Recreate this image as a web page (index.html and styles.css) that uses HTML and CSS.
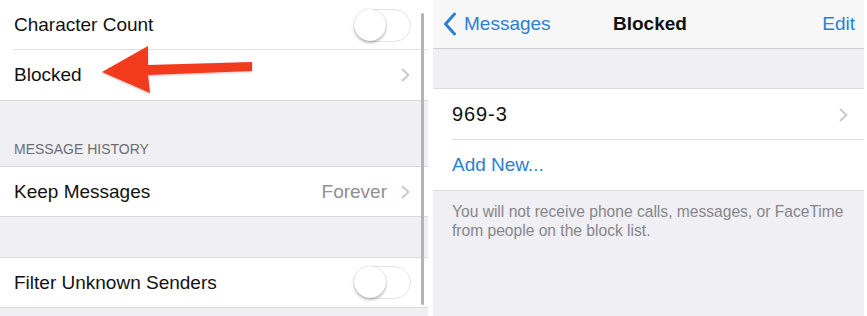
FILE: index.html
```html
<!DOCTYPE html>
<html>
<head>
<meta charset="utf-8">
<link rel="stylesheet" href="styles.css">
</head>
<body>
<div class="screen">
  <section class="panel left">
    <div class="row first inset">
      <span class="label">Character Count</span>
      <span class="switch"><span class="knob"></span></span>
    </div>
    <div class="row">
      <span class="label">Blocked</span>
      <svg class="chev" viewBox="0 0 9 14" width="9" height="14"><path d="M1.5 1.5 L7.5 7 L1.5 12.5" fill="none" stroke="#c7c7cc" stroke-width="1.8" stroke-linecap="round" stroke-linejoin="round"/></svg>
    </div>
    <div class="group-header">MESSAGE HISTORY</div>
    <div class="row bordered">
      <span class="label">Keep Messages</span>
      <span class="value">Forever</span>
      <svg class="chev" viewBox="0 0 9 14" width="9" height="14"><path d="M1.5 1.5 L7.5 7 L1.5 12.5" fill="none" stroke="#c7c7cc" stroke-width="1.8" stroke-linecap="round" stroke-linejoin="round"/></svg>
    </div>
    <div class="spacer"></div>
    <div class="row bordered">
      <span class="label">Filter Unknown Senders</span>
      <span class="switch"><span class="knob"></span></span>
    </div>
    <div class="scrollbar"></div>
    <svg class="arrow" viewBox="0 0 170 60" width="170" height="60">
      <defs>
        <filter id="sh" x="-10%" y="-20%" width="120%" height="140%">
          <feDropShadow dx="0" dy="1" stdDeviation="1" flood-color="#000" flood-opacity="0.25"/>
        </filter>
      </defs>
      <polygon filter="url(#sh)" fill="#f23a1d" points="12,32 58,6 58,25 162,22 162,31 58,35 60,53"/>
    </svg>
  </section>
  <section class="panel right">
    <header class="nav">
      <span class="back">
        <svg viewBox="0 0 14 24" width="14" height="24"><path d="M11.5 2 L2.5 12 L11.5 22" fill="none" stroke="#2b7fd4" stroke-width="3" stroke-linecap="round" stroke-linejoin="round"/></svg>
        <span>Messages</span>
      </span>
      <span class="title">Blocked</span>
      <span class="edit">Edit</span>
    </header>
    <div class="gap"></div>
    <div class="list">
      <div class="row inset-r">
        <span class="label num">969-3</span>
        <svg class="chev" viewBox="0 0 9 14" width="9" height="14"><path d="M1.5 1.5 L7.5 7 L1.5 12.5" fill="none" stroke="#c7c7cc" stroke-width="1.8" stroke-linecap="round" stroke-linejoin="round"/></svg>
      </div>
      <div class="row">
        <span class="label blue">Add New...</span>
      </div>
    </div>
    <p class="footer">You will not receive phone calls, messages, or FaceTime from people on the block list.</p>
  </section>
</div>
</body>
</html>
```
FILE: styles.css
```css
* { box-sizing: border-box; }
html, body {
  margin: 0;
  padding: 0;
  background: #ffffff;
}
body {
  font-family: "Liberation Sans", Arial, sans-serif;
  color: #111;
  width: 867px;
  height: 316px;
  overflow: hidden;
}
.screen {
  display: flex;
  gap: 5px;
  height: 316px;
}
.panel {
  background: #efeff4;
  height: 316px;
  display: flex;
  flex-direction: column;
}
.left {
  width: 428px;
  position: relative;
}
.right {
  width: 431px;
}
.row {
  background: #fff;
  height: 51px;
  display: flex;
  align-items: center;
  padding: 0 18px 0 14px;
  border-bottom: 1px solid #d9d9de;
  position: relative;
  flex-shrink: 0;
}
.row.first {
  height: 50px;
  border-bottom: none;
}
.row.inset::after {
  content: "";
  position: absolute;
  left: 13px;
  right: 0;
  bottom: 0;
  height: 1px;
  background: #e0e0e4;
}
.row.bordered {
  border-top: 1px solid #d9d9de;
}
.label {
  font-size: 19px;
  flex: 1;
}
.value {
  font-size: 19px;
  color: #8e8e93;
  margin-right: 14px;
}
.chev {
  display: block;
}
.switch {
  width: 57px;
  height: 33px;
  border-radius: 17px;
  border: 1.5px solid #e3e3e8;
  background: #fff;
  position: relative;
  margin-right: -1px;
}
.knob {
  position: absolute;
  left: -1px;
  top: -1px;
  width: 32px;
  height: 32px;
  border-radius: 50%;
  background: #fff;
  box-shadow: 0 2px 3px rgba(0,0,0,0.25), 0 0 1px rgba(0,0,0,0.3);
}
.group-header {
  height: 65px;
  font-size: 14px;
  color: #6d6d72;
  padding: 0 14px 9px;
  display: flex;
  align-items: flex-end;
  flex-shrink: 0;
}
.spacer {
  height: 40px;
  flex-shrink: 0;
}
.scrollbar {
  position: absolute;
  left: 421px;
  top: 13px;
  width: 3px;
  height: 292px;
  background: #b3b3b6;
  border-radius: 2px;
}
.arrow {
  position: absolute;
  left: 90px;
  top: 40px;
}
.nav {
  height: 49px;
  background: #f7f7f7;
  border-bottom: 1px solid #cfcfd3;
  display: flex;
  align-items: center;
  justify-content: space-between;
  padding: 0 9px 0 10px;
  position: relative;
  font-size: 19px;
}
.back {
  display: flex;
  align-items: center;
  gap: 7px;
  color: #2b7fd4;
}
.back svg { display: block; }
.title {
  position: absolute;
  left: 180px;
  font-weight: bold;
  color: #111;
}
.edit {
  color: #2b7fd4;
}
.gap {
  height: 40px;
  border-bottom: 1px solid #d9d9de;
}
.list {
  background: #fff;
}
.right .row {
  padding: 0 16px 0 19px;
}
.right .row.inset-r {
  border-bottom: none;
}
.right .row.inset-r::after {
  content: "";
  position: absolute;
  left: 19px;
  right: 0;
  bottom: 0;
  height: 1px;
  background: #e0e0e4;
}
.num {
  font-size: 20px;
  letter-spacing: 0.9px;
}
.blue {
  color: #2b7fd4;
}
.footer {
  margin: 0;
  padding: 11px 16px 0 19px;
  font-size: 15.6px;
  line-height: 19px;
  color: #86868b;
}
```
